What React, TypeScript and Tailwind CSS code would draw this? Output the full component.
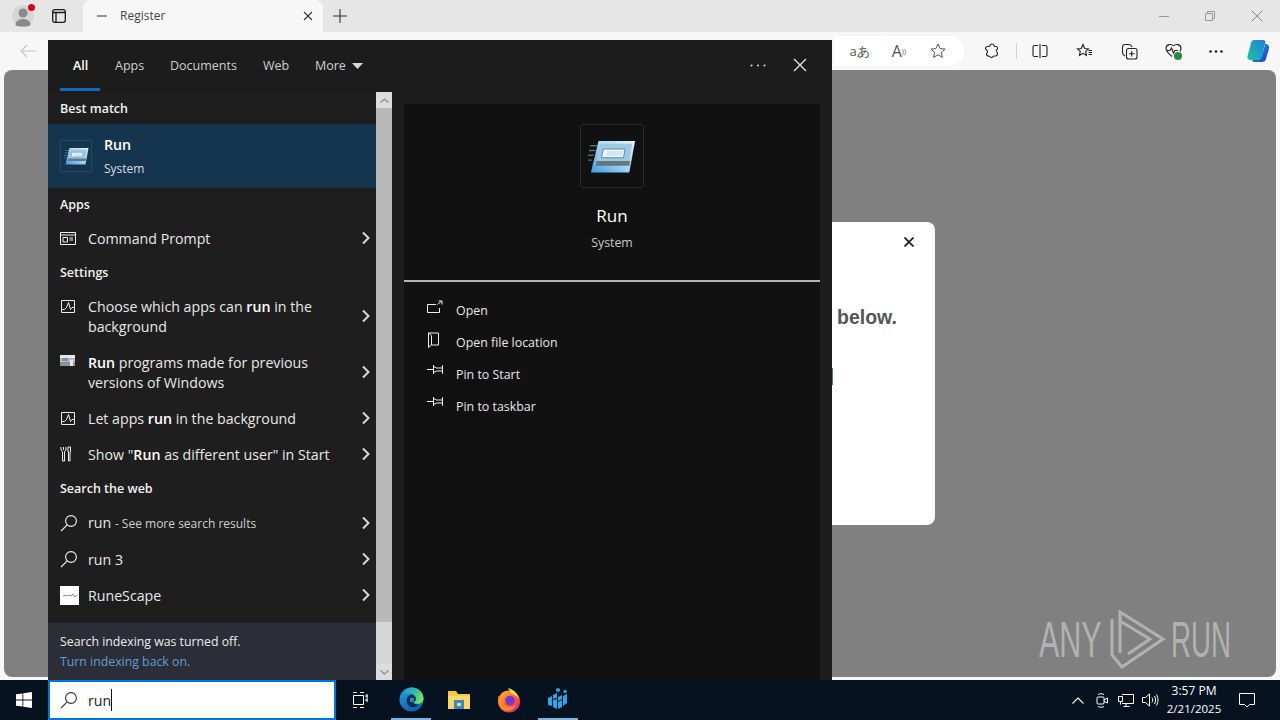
import type { ReactNode } from "react";

// Small line icons are drawn by hand to follow the Windows / Edge glyphs
const Chevron = () => (
  <svg width="10" height="14" viewBox="0 0 10 14" fill="none" stroke="#d8d8d8" strokeWidth="2" className="shrink-0">
    <path d="M2 1.5 7.5 7 2 12.5" />
  </svg>
);

const SearchGlyph = ({ color = "#f0f0f0" }: { color?: string }) => (
  <svg width="18" height="18" viewBox="0 0 18 18" fill="none" stroke={color} strokeWidth="1.1" className="shrink-0">
    <circle cx="11" cy="7" r="5.4" />
    <path d="M7.2 10.9 1 17" />
  </svg>
);

const RunIcon = ({ size }: { size: number }) => (
  <svg width={size} height={size * 0.72} viewBox="0 0 50 36">
    <defs>
      <linearGradient id={`run${size}`} x1="0" y1="1" x2="1" y2="0">
        <stop offset="0" stopColor="#3f9be0" />
        <stop offset="0.5" stopColor="#a8d6f3" />
        <stop offset="1" stopColor="#e4f3fc" />
      </linearGradient>
    </defs>
    <path d="M2 7h8M1 12h7M0 17h6M0 22h4" stroke="#9ab2c2" strokeWidth="1.5" opacity="0.55" />
    <path d="M11 2H49L43 35H3Z" fill={`url(#run${size})`} />
    <path d="M12 5H46L43 23H9Z" fill="#9cc9e6" />
    <path d="M9 23H44L43 28H8Z" fill="#66767f" />
    <path d="M16 10.500H38.500L37 19.500H14Z" fill="#eef8fe" stroke="#41708f" strokeWidth="0.8" />
    <path d="M20 12.500H36.500L35.500 17.500H19Z" fill="#cfe8f8" />
  </svg>
);

const PerfIcon = () => (
  <svg width="16" height="15" viewBox="0 0 16 15" fill="none" stroke="#f0f0f0" strokeWidth="1" className="shrink-0">
    <path d="M1.5 1.5h13v12h-13z" />
    <path d="M1.5 10.5h3l2-2 2-5 2 7 1.5-2h2.5" />
  </svg>
);

const CmdIcon = () => (
  <svg width="16" height="13" viewBox="0 0 16 13" fill="none" stroke="#f0f0f0" strokeWidth="1" className="shrink-0">
    <path d="M.5.5h15v12H.5zM.5 3h15" />
    <path d="M3 5.5h4.500v4.500H3zM9.500 6h3.500M9.500 8h3.500" />
  </svg>
);

const CompatIcon = () => (
  <svg width="15" height="11" viewBox="0 0 15 11" className="shrink-0">
    <rect width="15" height="11" fill="#b9bcc2" />
    <rect width="15" height="3" fill="#e6e8ee" />
    <rect x="2" y="3" width="6" height="3" fill="#7d8fa8" />
    <rect y="7" width="15" height="4" fill="#8f9193" />
    <rect x="10" y="5" width="3" height="6" fill="#e8e8e8" />
  </svg>
);

const ToolsIcon = () => (
  <svg width="12" height="16" viewBox="0 0 12 16" fill="none" stroke="#f0f0f0" strokeWidth="1" className="shrink-0">
    <path d="M1 1v3l1.500 1.500V15h2V5.500L6 4V1M3.500 1v3" />
    <path d="M8 1h2.500v5H10v9H8.500V6H8z" />
  </svg>
);

const Heading = ({ children }: { children: ReactNode }) => (
  <div className="flex h-8 items-center px-3 pt-[2px] text-[12.5px] font-semibold text-[#f2f2f2]">{children}</div>
);

const Row = ({ icon, h, children }: { icon: ReactNode; h: string; children: ReactNode }) => (
  <div className={`flex items-center pl-3 pr-[5px] text-[14.2px] leading-5 text-[#e8e8e8] ${h}`}>
    <div className="flex h-full w-7 shrink-0 items-center">{icon}</div>
    <div className="flex-1 pt-[2px]">{children}</div>
    <Chevron />
  </div>
);

const TwoLineRow = ({ icon, first, second }: { icon: ReactNode; first: ReactNode; second: ReactNode }) => (
  <div className="flex h-14 items-center pl-3 pr-[5px] text-[14.2px] leading-5 text-[#e8e8e8]">
    <div className="h-10 w-7 shrink-0 pt-[3px]">{icon}</div>
    <div className="flex-1 pt-[2px]">
      <div>{first}</div>
      <div>{second}</div>
    </div>
    <Chevron />
  </div>
);

const Action = ({ icon, label }: { icon: ReactNode; label: string }) => (
  <div className="flex h-8 items-center pl-[23px] text-[12.4px] text-[#e8e8e8]">
    <div className="flex h-full w-[29px] shrink-0 items-start pt-[5px]">{icon}</div>
    <span>{label}</span>
  </div>
);

const PinIcon = () => (
  <svg width="17" height="11" viewBox="0 0 17 11" fill="none" stroke="#f0f0f0" strokeWidth="1">
    <path d="M0 5.500h6M6.500 1v9M6.500 2.500l3 1.500h6V1.500v8V7h-6l-3 1.500" />
  </svg>
);

function StartMenu() {
  return (
    <div className="absolute left-12 top-10 flex h-[640px] w-[784px] flex-col bg-[#1c1c1c]">
      <div className="relative flex h-[52px] shrink-0 items-center text-[12.5px] text-[#cfcfcf]">
        <span className="absolute left-[25px] top-[17px] font-semibold text-white">All</span>
        <div className="absolute left-3 bottom-[1px] h-[3px] w-10 bg-[#0f6cbd]" />
        <span className="absolute left-[67px] top-[17px]">Apps</span>
        <span className="absolute left-[122px] top-[17px]">Documents</span>
        <span className="absolute left-[215px] top-[17px]">Web</span>
        <span className="absolute left-[267px] top-[17px]">More</span>
        <svg className="absolute left-[304px] top-[23px]" width="11" height="6" viewBox="0 0 11 6">
          <path d="M0 0h11L5.500 6z" fill="#d8d8d8" />
        </svg>
        <svg className="absolute left-[702px] top-[24px]" width="16" height="3" viewBox="0 0 16 3" fill="#e6e6e6">
          <circle cx="1.500" cy="1.500" r="1" />
          <circle cx="8" cy="1.500" r="1" />
          <circle cx="14.500" cy="1.500" r="1" />
        </svg>
        <svg className="absolute left-[745px] top-[18px]" width="14" height="14" viewBox="0 0 14 14" stroke="#e6e6e6" strokeWidth="1.300">
          <path d="M1 1l12 12M13 1 1 13" />
        </svg>
      </div>
      <div className="flex min-h-0 flex-1">
        <div className="flex w-[328px] shrink-0 flex-col bg-[#1e1e1e]">
          <Heading>Best match</Heading>
          <div className="flex h-16 items-center gap-3 bg-[#15354f] px-3">
            <div className="flex h-8 w-8 items-center justify-center border border-[#24486a]">
              <RunIcon size={25} />
            </div>
            <div>
              <div className="text-[14.2px] font-semibold leading-6 text-white">Run</div>
              <div className="mt-[2px] text-[12px] leading-5 text-[#d5dde4]">System</div>
            </div>
          </div>
          <Heading>Apps</Heading>
          <Row icon={<CmdIcon />} h="h-9">Command Prompt</Row>
          <Heading>Settings</Heading>
          <TwoLineRow
            icon={<PerfIcon />}
            first={<>Choose which apps can <b className="font-semibold text-white">run</b> in the</>}
            second="background"
          />
          <TwoLineRow
            icon={<CompatIcon />}
            first={<><b className="font-semibold text-white">Run</b> programs made for previous</>}
            second="versions of Windows"
          />
          <Row icon={<PerfIcon />} h="h-9">
            Let apps <b className="font-semibold text-white">run</b> in the background
          </Row>
          <Row icon={<ToolsIcon />} h="h-9">
            Show "<b className="font-semibold text-white">Run</b> as different user" in Start
          </Row>
          <Heading>Search the web</Heading>
          <Row icon={<SearchGlyph />} h="h-[37px]">
            run <span className="text-[12px] text-[#d0d0d0]">- See more search results</span>
          </Row>
          <Row icon={<SearchGlyph />} h="h-9">run 3</Row>
          <Row
            icon={
              <div className="flex h-[19px] w-[19px] items-center justify-center bg-white">
                <svg width="14" height="5" viewBox="0 0 14 5" fill="none" stroke="#6b6250" strokeWidth="0.8">
                  <path d="M0 3l2-1 2 1 2-1 2 1 2-2 2 3 2-2" />
                </svg>
              </div>
            }
            h="h-9"
          >
            RuneScape
          </Row>
          <div className="mt-auto flex h-[57px] flex-col justify-center bg-[#2b2e36] px-3 text-[12.3px] leading-5">
            <span className="text-[#ececec]">Search indexing was turned off.</span>
            <span className="text-[#5f9fd6]">Turn indexing back on.</span>
          </div>
        </div>
        <div className="flex w-4 shrink-0 flex-col bg-[#b8b8b8]">
          <div className="flex h-4 items-center justify-center bg-[#dcdcdc]">
            <svg width="9" height="5" viewBox="0 0 9 5" fill="none" stroke="#8c8c8c" strokeWidth="1.300">
              <path d="M.5 4.500l4-3.500 4 3.500" />
            </svg>
          </div>
          <div className="flex-1" />
          <div className="h-[42px] bg-[#d6d6d6]" />
          <div className="flex h-4 items-center justify-center bg-[#dcdcdc]">
            <svg width="9" height="5" viewBox="0 0 9 5" fill="none" stroke="#8c8c8c" strokeWidth="1.300">
              <path d="M.5.5l4 3.500 4-3.500" />
            </svg>
          </div>
        </div>
        <div className="flex-1 px-3 pt-3">
          <div className="flex h-full flex-col bg-[#111111]">
            <div className="flex h-[178px] shrink-0 flex-col items-center border-b-2 border-[#b5b5b5] pt-5">
              <div className="flex h-16 w-16 items-center justify-center rounded-[3px] border border-[#2b2b2b]">
                <RunIcon size={48} />
              </div>
              <div className="mt-4 text-[17px] leading-6 text-white">Run</div>
              <div className="mt-[5px] text-[12.3px] leading-5 text-[#c8c8c8]">System</div>
            </div>
            <div className="pt-[13px]">
              <Action
                label="Open"
                icon={
                  <svg width="16" height="15" viewBox="0 0 16 15" fill="none" stroke="#f0f0f0" strokeWidth="1">
                    <path d="M9 4.500H.5v8h12V8M10.500 4.500l4-3.500M11.500 1H15v3.500" />
                  </svg>
                }
              />
              <Action
                label="Open file location"
                icon={
                  <svg width="14" height="16" viewBox="0 0 14 16" fill="none" stroke="#f0f0f0" strokeWidth="1">
                    <path d="M1.500 1h10v12h-7L1.500 15.500zM1.500 1l3 2.500V13" />
                  </svg>
                }
              />
              <Action label="Pin to Start" icon={<PinIcon />} />
              <Action label="Pin to taskbar" icon={<PinIcon />} />
            </div>
          </div>
        </div>
      </div>
    </div>
  );
}

function TabStrip() {
  return (
    <div className="flex h-8 shrink-0 items-end bg-[#e6e6e6]">
      <div className="relative ml-[11px] flex h-8 w-[23px] items-center justify-center">
        <svg width="22" height="24" viewBox="0 0 22 24">
          <circle cx="11" cy="12" r="11" fill="#d6d6d6" />
          <circle cx="11" cy="9" r="4.500" fill="#8a8a8a" />
          <path d="M3.500 21c0-4 3.500-6 7.500-6s7.500 2 7.500 6c-2 2-13 2-15 0z" fill="#8a8a8a" />
        </svg>
        <div className="absolute right-[-1px] top-[4px] h-[7px] w-[7px] rounded-full bg-[#d9001b]" />
      </div>
      <div className="ml-[18px] flex h-8 w-[16px] items-center">
        <svg width="14" height="14" viewBox="0 0 14 14" fill="none" stroke="#1a1a1a" strokeWidth="1.300">
          <rect x=".7" y=".7" width="12.600" height="12.600" rx="2" />
          <path d="M.7 3.500h12.600M4 3.500v9.800" />
        </svg>
      </div>
      <div className="ml-[15px] flex h-8 w-[240px] items-center rounded-t-lg bg-[#f7f7f7] pl-[11px] pr-[10px] text-[12px] text-[#444444]">
        <div className="flex h-4 w-4 items-center justify-center">
          <div className="h-[2px] w-[10px] bg-[#9a8f8f]" />
        </div>
        <span className="ml-[10px] flex-1">Register</span>
        <svg width="10" height="10" viewBox="0 0 10 10" stroke="#333333" strokeWidth="1.100">
          <path d="M1 1l8 8M9 1 1 9" />
        </svg>
      </div>
      <div className="ml-[10px] flex h-8 w-[14px] items-center">
        <svg width="14" height="14" viewBox="0 0 14 14" stroke="#333333" strokeWidth="1.100">
          <path d="M7 0v14M0 7h14" />
        </svg>
      </div>
      <div className="ml-auto mr-[17px] flex h-8 items-center gap-[36px]">
        <svg width="10" height="10" viewBox="0 0 10 10" stroke="#9a9a9a">
          <path d="M0 5.500h10" />
        </svg>
        <svg width="10" height="10" viewBox="0 0 10 10" fill="none" stroke="#9a9a9a">
          <path d="M.5 2.500h7v7h-7zM2.500 2.500v-2h7v7h-2" />
        </svg>
        <svg width="12" height="12" viewBox="0 0 12 12" stroke="#8a8a8a">
          <path d="M.5.5l11 11M11.500.5l-11 11" />
        </svg>
      </div>
    </div>
  );
}

function Toolbar() {
  return (
    <div className="flex h-[38px] shrink-0 items-center bg-[#f7f7f7]">
      <svg className="ml-[20px]" width="16" height="14" viewBox="0 0 16 14" fill="none" stroke="#c4c4c4" strokeWidth="1.200">
        <path d="M16 7H1M7 1 1 7l6 6" />
      </svg>
      {/* the address pill, mostly hidden by the start menu */}
      <div className="ml-auto flex h-[30px] w-[130px] items-center justify-end rounded-r-[15px] bg-white pr-[18px] text-[#555555]">
        <span className="text-[13px] leading-none">aあ</span>
        <span className="ml-[22px] text-[16px] leading-none">A<sup className="text-[7px]">))</sup></span>
        <svg className="ml-6" width="16" height="16" viewBox="0 0 16 16" fill="none" stroke="#555555">
          <path d="M8 1l2.100 4.600 5 .5-3.800 3.300 1.100 4.900L8 11.800l-4.400 2.500 1.100-4.900L.9 6.100l5-.5z" />
        </svg>
      </div>
      <div className="ml-5 flex items-center">
        <svg width="16" height="16" viewBox="0 0 16 16" fill="none" stroke="#222222" strokeWidth="1.100">
          <path d="M6 2.500c0-2 4-2 4 0 0 .5 0 1 1 1h1.500c1 0 1 1 1 2 0 1-.5 1-1 1.500-1 1 1 2 1 3.500s-1 2.500-2 2.500h-1.500c-1 0-1 1.500-2.500 1.500S5.500 13 4.500 13 2.500 12 2.500 11c0-1 1-1 1-2.500S1.500 7 1.500 5.500 3 3.500 4 3.500s2 0 2-1z" />
        </svg>
        <div className="ml-4 h-4 w-px bg-[#d2d2d2]" />
        <svg className="ml-[15px]" width="16" height="16" viewBox="0 0 16 16" fill="none" stroke="#222222" strokeWidth="1.100">
          <path d="M6 2.500H2.500a1.500 1.500 0 0 0-1.500 1.500v8a1.500 1.500 0 0 0 1.500 1.500H6M10 2.500h3.500A1.500 1.500 0 0 1 15 4v8a1.500 1.500 0 0 1-1.500 1.500H10M8 1v14" />
        </svg>
        <svg className="ml-[28px]" width="17" height="16" viewBox="0 0 17 16" fill="none" stroke="#222222" strokeWidth="1.100">
          <path d="M7 1.500l1.700 4 3.800.4-2.800 2.500.8 4L7 10.300l-3.500 2.100.8-4L1.500 5.900l3.800-.4zM12.500 7.500H16M12.500 9.500H16M12.500 11.500H16" />
        </svg>
        <svg className="ml-[28px]" width="17" height="17" viewBox="0 0 17 17" fill="none" stroke="#222222" strokeWidth="1.100">
          <rect x="5.500" y="5.500" width="10.500" height="10.500" rx="2" />
          <path d="M10.700 8v5.500M8 10.700h5.500M4 13C2 12 1.500 11 1.500 9.500V4A2.500 2.500 0 0 1 4 1.500h4c1.500 0 2.500 1 3 2.500" />
        </svg>
        <div className="relative ml-[27px] h-[17px] w-[17px]">
          <svg width="17" height="17" viewBox="0 0 17 17" fill="none" stroke="#222222" strokeWidth="1.100">
            <path d="M8.500 3C6.500.5 1 1 1 5.500c0 2.500 3 5.500 6 8M8.500 3c2-2.500 7.500-2 7.500 2.500 0 1-.5 2-1 3M1 7.500h4L6.500 5l2 5 1.500-2.500h3" />
          </svg>
          <div className="absolute bottom-0 right-0 h-2 w-2 rounded-full bg-[#2e8b3d]" />
        </div>
        <svg className="ml-[27px]" width="14" height="3" viewBox="0 0 14 3" fill="#222222">
          <circle cx="1.500" cy="1.500" r="1.300" />
          <circle cx="7" cy="1.500" r="1.300" />
          <circle cx="12.500" cy="1.500" r="1.300" />
        </svg>
        <svg className="ml-[23px] mr-[10px]" width="24" height="24" viewBox="0 0 24 24">
          <defs>
            <linearGradient id="copilotA" x1="0" y1="1" x2="1" y2="0">
              <stop offset="0" stopColor="#1fc2a0" />
              <stop offset="1" stopColor="#1a7fe0" />
            </linearGradient>
            <linearGradient id="copilotB" x1="0" y1="0" x2="1" y2="1">
              <stop offset="0" stopColor="#2a9be8" />
              <stop offset="1" stopColor="#1a3fc0" />
            </linearGradient>
          </defs>
          <path d="M8 1h9c2 0 2.500 1 2.500 2L15 19c-.5 1.500-1.500 2-3 2H5c-3 0-4-2-3.500-4L5 4c.5-2 1.500-3 3-3z" fill="url(#copilotA)" />
          <path d="M15 5h4c3 0 4.500 2 4 4.500L20 20c-.5 2-2 3-4 3H8c-1.500 0-2-1-1.500-2H12c1.500 0 2.500-1 3-2.500L19 6c0-.5-2-1-4-1z" fill="url(#copilotB)" />
        </svg>
      </div>
    </div>
  );
}

function Watermark() {
  return (
    <div className="absolute left-[1039px] top-[607px] flex items-center text-[#b2b2b2]">
      <span className="w-[67px] origin-left scale-x-[0.61] text-[50px] leading-none [font-family:'Liberation_Sans',sans-serif]">ANY</span>
      <svg width="62" height="66" viewBox="0 0 62 66" fill="none" stroke="#b2b2b2" strokeWidth="3">
        <path d="M6 12V48L16 60L57 32L14 5V46" />
        <path d="M14 14L44 32L22 47" />
      </svg>
      <span className="ml-[3px] w-[62px] origin-left scale-x-[0.555] text-[50px] leading-none [font-family:'Liberation_Sans',sans-serif]">RUN</span>
    </div>
  );
}

function Taskbar() {
  return (
    <div className="flex h-10 shrink-0 items-center bg-[#06121f] text-white">
      <div className="flex w-12 items-center justify-center">
        <svg width="16" height="16" viewBox="0 0 16 16" fill="#ffffff">
          <path d="M0 2.300 6.500 1.400v6.200H0zM7.300 1.300 16 0v7.600H7.300zM0 8.400h6.500v6.200L0 13.700zM7.300 8.400H16V16l-8.700-1.300z" />
        </svg>
      </div>
      <div className="flex h-10 w-[288px] items-center border-2 border-[#0078d7] bg-white pl-[10px] text-[14.2px] text-[#222222]">
        <SearchGlyph color="#333333" />
        <span className="ml-[10px] border-r border-[#111111] pt-[2px] leading-5">run</span>
      </div>
      <div className="ml-[16px] flex w-[16px] justify-center">
        <svg width="16" height="16" viewBox="0 0 16 16" fill="none" stroke="#ffffff">
          <path d="M1 .5h4M8 .5h4M1 15.500h4M8 15.500h4M1.500 3.500h10v9h-10zM14 3h2v2h-2zM14 7h2v2h-2z" />
        </svg>
      </div>
      <div className="relative ml-[23px] flex h-10 w-10 items-center justify-center border-b-2 border-[#7db4de]">
        <svg width="25" height="25" viewBox="0 0 26 26">
          <defs>
            <linearGradient id="edgeA" x1="0" y1="0" x2="1" y2="0.6">
              <stop offset="0" stopColor="#1d9ad6" />
              <stop offset="0.55" stopColor="#2fc0a8" />
              <stop offset="1" stopColor="#7be25a" />
            </linearGradient>
            <linearGradient id="edgeB" x1="0" y1="0" x2="0.6" y2="1">
              <stop offset="0" stopColor="#2ba0e0" />
              <stop offset="1" stopColor="#0d5fae" />
            </linearGradient>
          </defs>
          <circle cx="13" cy="13" r="12.500" fill="url(#edgeB)" />
          <path d="M5 6C7 2 10 .5 13 .5c7 0 12.500 5 12.500 11.500 0 3.500-2.500 5.500-6 5.500-2 0-4-.7-4.500-1.500 2-.5 3-2 2.500-4C17 8 13 6 10 6.500 8 6.800 6.500 6.500 5 6z" fill="url(#edgeA)" />
          <path d="M8 14c0-4 3-6.500 6-6 2 .5 3.500 2 3.500 4 0 2.500-2 3.500-2.500 4.500 1 1.500 3 2 5 2-2 2-5 3-7.500 2.500C10 20 8 17.500 8 14z" fill="#0a2a4a" />
          <circle cx="13.500" cy="13.500" r="2.500" fill="#1d86cc" />
        </svg>
      </div>
      <div className="ml-[8px] flex h-10 w-10 items-center justify-center">
        <svg width="24" height="20" viewBox="0 0 24 20">
          <path d="M1 1h8l2 3h12v15H1z" fill="#f5c84a" />
          <rect x="1" y="6" width="22" height="13" fill="#f8d96a" />
          <rect x="7" y="10" width="10" height="9" fill="#3a87c8" />
          <rect x="10" y="13" width="4" height="3" fill="#f8d96a" />
        </svg>
      </div>
      <div className="ml-[10px] flex h-10 w-10 items-center justify-center">
        <svg width="26" height="26" viewBox="0 0 26 26">
          <defs>
            <linearGradient id="foxA" x1="0.2" y1="0" x2="0.8" y2="1">
              <stop offset="0" stopColor="#ffb52f" />
              <stop offset="0.5" stopColor="#ff5a3a" />
              <stop offset="1" stopColor="#e5257f" />
            </linearGradient>
          </defs>
          <circle cx="13" cy="14.500" r="11" fill="url(#foxA)" />
          <path d="M12 1c6 1.500 10 6 11 11-2-3-5-4.500-7-5-1-2.500-3-3.500-4-6z" fill="#ffdc45" />
          <circle cx="14" cy="13.500" r="4.800" fill="#7a35cc" />
          <path d="M2.500 9c2 .5 4 2 5 4-1 4 2 7 6 7 3 0 5-1 6.500-3-1 5-6 8-11 6.500C3.500 22 1.500 15 2.500 9z" fill="#ff8a2a" />
        </svg>
      </div>
      <div className="ml-[9px] flex h-10 w-10 items-center justify-center border-b-2 border-[#7db4de]">
        <svg width="22" height="24" viewBox="0 0 22 24" fill="#2ba6e6">
          <path d="M1 11l4-2v10l-4-1zM6 8l4-2v5l-4 1zM6 13l4-1v10l-4-2zM11 10l4-2v4l-4 2zM11 15l4-2v7l-4 2zM16 9l4-2v9l-4 3z" />
          <circle cx="11" cy="3" r="2" />
          <circle cx="18" cy="4.500" r="1.700" />
        </svg>
      </div>
      <div className="ml-auto flex items-center">
        <svg width="12" height="7" viewBox="0 0 12 7" fill="none" stroke="#ffffff" strokeWidth="1.100">
          <path d="M.5 6.500 6 1l5.500 5.500" />
        </svg>
        <svg className="ml-3" width="12" height="15" viewBox="0 0 12 15" fill="none" stroke="#ffffff">
          <rect x="1" y="4" width="7" height="7" rx="1" />
          <path d="M8 7l3.500-2v5L8 8.500M2 1.500c2-1 4-1 6 0M2 13.500c2 1 4 1 6 0" />
        </svg>
        <svg className="ml-[10px]" width="16" height="14" viewBox="0 0 16 14" fill="none" stroke="#ffffff">
          <path d="M4 1.500h11.500v9H4M8 10.500v3M5.500 13.500h6M.5 3.500h4v5h-4zM2.500 8.500v3" />
        </svg>
        <svg className="ml-[8px]" width="17" height="14" viewBox="0 0 17 14" fill="none" stroke="#ffffff">
          <path d="M.5 4.500h3L7.500 1v12l-4-3.500h-3zM10 4.500c1 1.500 1 3.500 0 5M12.500 3c1.500 2.500 1.500 5.500 0 8M14.500 1.500c2 3.500 2 7.500 0 11" />
        </svg>
        <div className="w-[70px] text-center text-[12px] leading-[18px]">
          <div>3:57 PM</div>
          <div className="text-[11.5px]">2/21/2025</div>
        </div>
        <svg className="ml-[10px] mr-[25px]" width="16" height="16" viewBox="0 0 16 16" fill="none" stroke="#ffffff">
          <path d="M.5 1.500h15v11h-5L8 15l-2.500-2.500h-5z" />
        </svg>
      </div>
    </div>
  );
}

export default function App() {
  return (
    <div className="relative flex h-[720px] w-[1280px] flex-col overflow-hidden bg-[#f7f7f7] [font-family:'Open_Sans','Noto_Sans',sans-serif]">
      <TabStrip />
      <Toolbar />
      {/* dimmed page with the register dialog on it */}
      <div className="min-h-0 flex-1 px-1 pb-[3px]">
        <div className="relative h-full rounded-lg bg-[#808080]">
          <div className="absolute left-[700px] top-[152px] h-[303px] w-[231px] rounded-lg bg-white text-[19.5px] font-bold text-[#555555]">
            <svg className="absolute right-[21px] top-[15px]" width="10" height="10" viewBox="0 0 10 10" stroke="#222222" strokeWidth="1.800">
              <path d="M.5.5l9 9M9.500.5l-9 9" />
            </svg>
            <span className="absolute left-[133px] top-[81px] [font-family:'Liberation_Sans',sans-serif]">below.</span>
            <div className="absolute left-[126px] top-[146px] h-[17px] w-[3px] bg-[#58708f]" />
          </div>
        </div>
      </div>
      <Watermark />
      <Taskbar />
      <StartMenu />
    </div>
  );
}
